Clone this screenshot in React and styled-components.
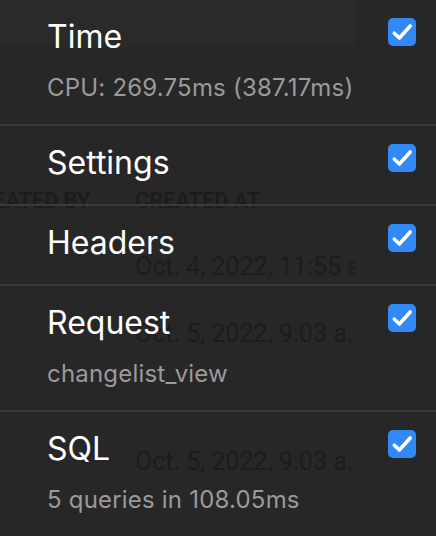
import React from "react";
import styled, { createGlobalStyle } from "styled-components";

const Global = createGlobalStyle`
  html, body { margin: 0; padding: 0; background: #272727; }
  body { width: 436px; height: 536px; overflow: hidden; }
  #root { position: relative; width: 436px; height: 536px; overflow: hidden; }
`;

const Backdrop = styled.div`
  position: absolute;
  top: 0;
  left: 0;
  width: 355px;
  height: 536px;
  overflow: hidden;
  z-index: 0;
  font-family: Roboto, "Liberation Sans", sans-serif;
  color: #1c1c1c;
`;

const StripeBand = styled.div`
  height: ${(p) => p.$h}px;
  background: ${(p) => (p.$light ? "#2a2a2a" : "transparent")};
`;

const GhostRow = styled.div`
  display: grid;
  grid-template-columns: 170px auto;
  margin-left: -35px;
  height: ${(p) => p.$h}px;
  white-space: nowrap;
`;

const GhostHead = styled.div`
  font-size: 22px;
  font-weight: 700;
  line-height: 26px;
  letter-spacing: -0.2px;
`;

const GhostCell = styled.div`
  font-size: 25px;
  line-height: 30px;
  font-weight: 400;
`;

const List = styled.div`
  position: relative;
  z-index: 1;
  font-family: Inter, "Noto Sans", sans-serif;
`;

const Row = styled.div`
  display: flex;
  align-items: flex-start;
  justify-content: space-between;
  padding: 17px 20px 21px 47px;
  border-bottom: 2px solid #3b3b3b;
`;

const Texts = styled.div`
  display: flex;
  flex-direction: column;
  gap: 16px;
`;

const Title = styled.div`
  font-size: 32px;
  line-height: 40px;
  color: #ffffff;
  letter-spacing: 0;
`;

const Sub = styled.div`
  font-size: 24px;
  line-height: 30px;
  color: #9a9a9a;
  letter-spacing: 0.2px;
`;

const Box = styled.span`
  display: flex;
  align-items: center;
  justify-content: center;
  width: 28px;
  height: 28px;
  margin-top: 1px;
  border-radius: 5px;
  background: #3289f6;
  flex-shrink: 0;
`;

const Check = () => (
  <Box>
    <svg width="28" height="28" viewBox="0 0 28 28">
      <path
        d="M6.3 15.2 L11.4 20 L22.2 8"
        fill="none"
        stroke="#fff"
        strokeWidth="3.6"
        strokeLinecap="round"
        strokeLinejoin="round"
      />
    </svg>
  </Box>
);

const panels = [
  { title: "Time", sub: "CPU: 269.75ms (387.17ms)" },
  { title: "Settings" },
  { title: "Headers" },
  { title: "Request", sub: "changelist_view" },
  { title: "SQL", sub: "5 queries in 108.05ms" },
];

export default function App() {
  return (
    <>
      <Global />
      <Backdrop>
        <StripeBand $h={46} $light />
        <StripeBand $h={142} />
        <GhostRow $h={63.5}>
          <GhostHead>CREATED BY</GhostHead>
          <GhostHead>CREATED AT</GhostHead>
        </GhostRow>
        <GhostRow $h={67}>
          <span />
          <GhostCell>Oct. 4, 2022, 11:55 a.m.</GhostCell>
        </GhostRow>
        <GhostRow $h={128}>
          <span />
          <GhostCell>Oct. 5, 2022, 9:03 a.m.</GhostCell>
        </GhostRow>
        <GhostRow $h={60}>
          <span />
          <GhostCell>Oct. 5, 2022, 9:03 a.m.</GhostCell>
        </GhostRow>
      </Backdrop>
      <List>
        {panels.map((p) => (
          <Row key={p.title}>
            <Texts>
              <Title>{p.title}</Title>
              {p.sub && <Sub>{p.sub}</Sub>}
            </Texts>
            <Check />
          </Row>
        ))}
      </List>
    </>
  );
}
